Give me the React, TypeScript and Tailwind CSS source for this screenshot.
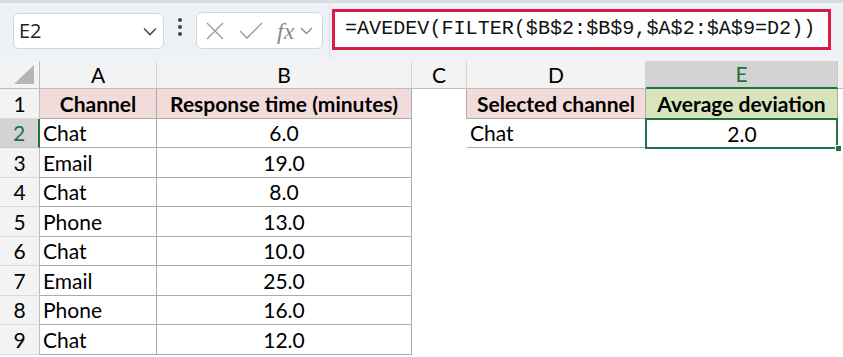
import React from "react";

const FONT = { fontFamily: "Lato, 'Open Sans', sans-serif" };
const MONO = { fontFamily: "'Liberation Mono', 'DejaVu Sans Mono', monospace" };

const data: [string, string][] = [
  ["Chat", "6.0"],
  ["Email", "19.0"],
  ["Chat", "8.0"],
  ["Phone", "13.0"],
  ["Chat", "10.0"],
  ["Email", "25.0"],
  ["Phone", "16.0"],
  ["Chat", "12.0"],
];

const cols = "grid-cols-[40px_117px_255px_55px_179px_192px_1fr]";

function ColHeader({ label, selected }: { label: string; selected?: boolean }) {
  return (
    <div
      className={
        selected
          ? "h-[28px] flex items-center justify-center bg-[#d3d3d3] text-[#1e7145] border-r border-[#c8c8c8] border-b-2 border-b-[#217346] text-[21px]"
          : "h-[28px] flex items-center justify-center bg-[#f3f3f3] text-black border-r border-[#d4d4d4] border-b border-b-[#bdbdbd] text-[21px]"
      }
    >
      {label}
    </div>
  );
}

export default function App() {
  return (
    <div className="w-[843px] h-[357px] overflow-hidden bg-white relative" style={FONT}>
      {/* toolbar */}
      <div className="h-[61px] bg-[#eef1f5] border-t-[3px] border-[#d9dde2] flex items-start relative">
        <div className="ml-[13px] mt-[10px] w-[151px] h-[36px] bg-white border border-[#d6d6d6] rounded-[6px] flex items-center justify-between pl-[5px] pr-[6px]">
          <span className="text-[20px] text-[#222]" style={{ fontFamily: "'Open Sans', sans-serif" }}>E2</span>
          <svg width="14" height="9" viewBox="0 0 14 9"><path d="M1 1.5 L7 7.5 L13 1.5" fill="none" stroke="#5a4a44" strokeWidth="1.6" /></svg>
        </div>
        <div className="ml-[14px] mt-[15px] flex flex-col gap-[3px]">
          <div className="w-[4px] h-[4px] rounded-full bg-[#444]" />
          <div className="w-[4px] h-[4px] rounded-full bg-[#444]" />
          <div className="w-[4px] h-[4px] rounded-full bg-[#444]" />
        </div>
        <div className="ml-[14px] mt-[9px] w-[127px] h-[37px] bg-white border border-[#d6d6d6] rounded-[6px] flex items-center pl-[9px]">
          <svg width="18" height="18" viewBox="0 0 18 18"><path d="M1 1 L17 17 M17 1 L1 17" stroke="#9a9a9a" strokeWidth="1.3" fill="none" /></svg>
          <svg className="ml-[15px]" width="24" height="18" viewBox="0 0 24 18"><path d="M1 9 L8 16 L23 1" stroke="#9a9a9a" strokeWidth="1.3" fill="none" /></svg>
          <span className="ml-[14px] italic text-[24px] text-[#8a8a8a] leading-none" style={{ fontFamily: "'Liberation Serif', serif" }}>fx</span>
          <svg className="ml-[6px]" width="13" height="8" viewBox="0 0 13 8"><path d="M1 1 L6.5 6.5 L12 1" fill="none" stroke="#8a8a8a" strokeWidth="1.3" /></svg>
        </div>
        <div className="ml-[6px] mt-[0px] w-[1px] h-[55px] bg-[#dde0e4]" />
        <div className="ml-[2px] mt-[6px] w-[499px] h-[41px] border-[3px] border-[#dc1c48] bg-white flex items-center pl-[10px]">
          <span className="text-[20.1px] text-[#111] whitespace-nowrap" style={MONO}>=AVEDEV(FILTER($B$2:$B$9,$A$2:$A$9=D2))</span>
        </div>
      </div>

      {/* grid */}
      <div className={`grid ${cols} leading-[28px]`}>
        {/* header row */}
        <div className="h-[28px] bg-[#f3f3f3] border-r border-[#bdbdbd] border-b border-b-[#bdbdbd] flex items-end justify-end pr-[5px] pb-[4px]">
          <svg width="20" height="19" viewBox="0 0 20 19"><path d="M20 0 L20 19 L0 19 Z" fill="#b5b5b5" /></svg>
        </div>
        <ColHeader label="A" />
        <ColHeader label="B" />
        <ColHeader label="C" />
        <ColHeader label="D" />
        <ColHeader label="E" selected />
        <div className="h-[28px] bg-[#f3f3f3] border-b border-b-[#bdbdbd]" />

        {/* row 1 */}
        <div className="h-[29.5px] bg-[#f3f3f3] border-r border-[#bdbdbd] border-b border-b-[#dadada] flex items-end justify-center text-[21px]">1</div>
        <div className="h-[29.5px] bg-[#f2dcdb] border-r border-b border-[#ababab] flex items-end justify-center text-[21px] font-bold">Channel</div>
        <div className="h-[29.5px] bg-[#f2dcdb] border-r border-b border-[#ababab] flex items-end justify-center text-[21px] font-bold whitespace-nowrap">Response time (minutes)</div>
        <div className="h-[29.5px] border-r border-[#ababab]" />
        <div className="h-[29.5px] bg-[#f2dcdb] border-r border-b border-[#ababab] flex items-end justify-center text-[21px] font-bold whitespace-nowrap">Selected channel</div>
        <div className="h-[29.5px] bg-[#d8e4bc] border-r border-b border-[#ababab] flex items-end justify-center text-[21px] font-bold whitespace-nowrap">Average deviation</div>
        <div className="h-[29.5px]" />

        {data.map(([ch, t], i) => {
          const r = i + 2;
          const sel = r === 2;
          return (
            <React.Fragment key={r}>
              <div
                className={
                  sel
                    ? "h-[29.5px] bg-[#d3d3d3] text-[#1e7145] border-r-2 border-r-[#217346] border-b border-b-[#c6c6c6] flex items-end justify-center text-[21px]"
                    : "h-[29.5px] bg-[#f3f3f3] border-r border-[#bdbdbd] border-b border-b-[#dadada] flex items-end justify-center text-[21px]"
                }
              >
                {r}
              </div>
              <div className="h-[29.5px] border-r border-b border-[#ababab] flex items-end pl-[3px] text-[21px]">{ch}</div>
              <div className="h-[29.5px] border-r border-b border-[#ababab] flex items-end justify-center text-[21px]">{t}</div>
              <div className="h-[29.5px]" />
              {sel ? (
                <>
                  <div className="h-[29.5px] border-r border-b border-[#ababab] flex items-end pl-[3px] text-[21px]">Chat</div>
                  <div className="h-[29.5px] relative flex items-end justify-center text-[21px]">
                    2.0
                    <div className="absolute -left-[1px] -top-[1px] right-0 -bottom-[1px] border-2 border-[#217346]" />
                    <div className="absolute -right-[4px] -bottom-[4px] w-[7px] h-[7px] bg-[#217346] border border-white" />
                  </div>
                </>
              ) : (
                <>
                  <div className="h-[29.5px]" />
                  <div className="h-[29.5px]" />
                </>
              )}
              <div className="h-[29.5px]" />
            </React.Fragment>
          );
        })}
      </div>
    </div>
  );
}
